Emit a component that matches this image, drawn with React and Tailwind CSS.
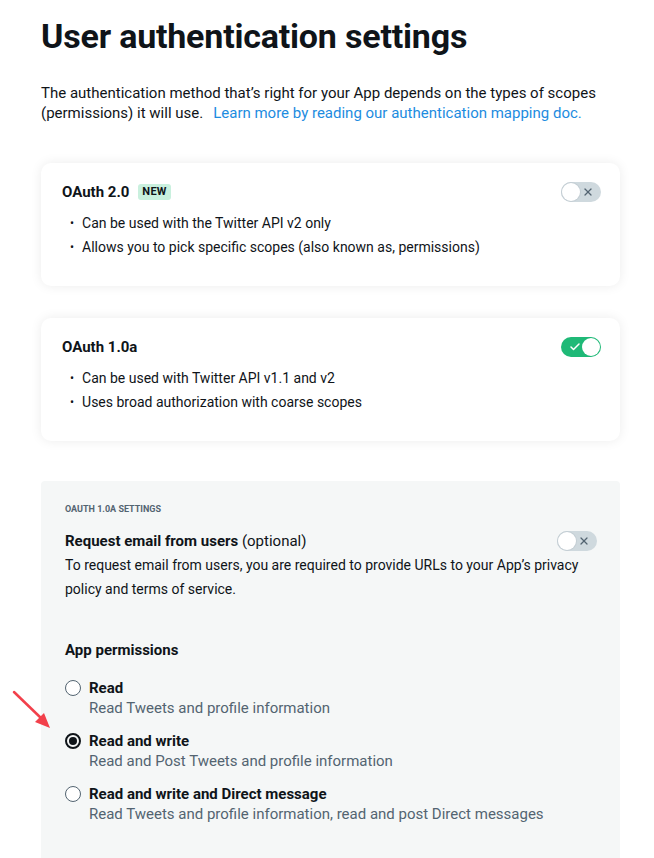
import { Check, X } from "lucide-react";

function Toggle({ on }) {
  if (on) {
    return (
      <div className="flex h-[20px] w-[40px] items-center justify-between rounded-full bg-[#1fb977] pl-[8px] pr-[1px]">
        <Check size={12} strokeWidth={3} className="text-white" />
        <div className="h-[18px] w-[18px] rounded-full bg-white" />
      </div>
    );
  }
  return (
    <div className="flex h-[20px] w-[40px] items-center justify-between rounded-full bg-[#cfd9de] pl-[1px] pr-[7px]">
      <div className="h-[18px] w-[18px] rounded-full bg-white shadow-[0_0_0_1px_#c4ced4]" />
      <X size={12} strokeWidth={2.5} className="text-[#536471]" />
    </div>
  );
}

function Card({ title, badge, on, items }) {
  return (
    <div className="rounded-[10px] bg-white pl-[21px] pr-[19px] pt-[19px] pb-[27px] shadow-[0_0_12px_rgba(0,0,0,0.08)]">
      <div className="flex items-center justify-between">
        <div className="flex items-center gap-[9px]">
          <span className="text-[15px] font-bold leading-[20px]">{title}</span>
          {badge && (
            <span className="rounded-[3px] bg-[#c9f0de] px-[4px] text-[11px] font-bold leading-[16px] tracking-wide text-[#0f1419]">
              {badge}
            </span>
          )}
        </div>
        <Toggle on={on} />
      </div>
      <ul className="mt-[9px] pl-[8px]">
        {items.map((t) => (
          <li key={t} className="flex items-center text-[14px] leading-[24px]">
            <span className="mr-[8px] text-[12px]">•</span>
            {t}
          </li>
        ))}
      </ul>
    </div>
  );
}

function Radio({ checked, label, desc }) {
  return (
    <div className="flex">
      <div
        className={
          checked
            ? "mt-[2px] flex h-[16px] w-[16px] items-center justify-center rounded-full border-[2px] border-[#0f1419]"
            : "mt-[2px] h-[16px] w-[16px] rounded-full border border-[#536471] bg-white"
        }
      >
        {checked && <div className="h-[8px] w-[8px] rounded-full bg-[#0f1419]" />}
      </div>
      <div className="ml-[8px]">
        <div className="text-[15px] font-bold leading-[20px]">{label}</div>
        <div className="text-[15px] leading-[20px] text-[#536471]">{desc}</div>
      </div>
    </div>
  );
}

export default function App() {
  return (
    <div
      className="relative min-h-[858px] bg-white px-[41px] pt-[16px] text-[#0f1419]"
      style={{ fontFamily: "Roboto, 'Liberation Sans', sans-serif" }}
    >
      <h1 className="text-[34px] font-bold leading-[40px] tracking-[-0.2px]">User authentication settings</h1>

      <p className="mt-[27px] text-[15px] leading-[20px]">
        The authentication method that’s right for your App depends on the types of scopes (permissions) it will use.
        <a className="ml-[10px] text-[#1d8ce0]">Learn more by reading our authentication mapping doc.</a>
      </p>

      <div className="mt-[40px] w-[579px]">
        <Card
          title="OAuth 2.0"
          badge="NEW"
          on={false}
          items={["Can be used with the Twitter API v2 only", "Allows you to pick specific scopes (also known as, permissions)"]}
        />
        <div className="h-[32px]" />
        <Card
          title="OAuth 1.0a"
          on={true}
          items={["Can be used with Twitter API v1.1 and v2", "Uses broad authorization with coarse scopes"]}
        />
      </div>

      <div className="mt-[40px] w-[579px] rounded-t-[4px] bg-[#f5f7f7] pl-[24px] pr-[23px] pt-[22px] pb-[40px]">
        <div className="text-[9px] font-bold uppercase leading-[12px] text-[#536471]">OAuth 1.0a settings</div>

        <div className="mt-[16px] flex items-center justify-between">
          <div className="text-[15px] leading-[20px]">
            <span className="font-bold">Request email from users</span> (optional)
          </div>
          <Toggle on={false} />
        </div>
        <p className="mt-[2px] text-[14px] leading-[24px]">
          To request email from users, you are required to provide URLs to your App’s privacy policy and terms of service.
        </p>

        <div className="mt-[39px] text-[15px] font-bold leading-[20px]">App permissions</div>

        <div className="mt-[18px] flex flex-col gap-[13px]">
          <Radio label="Read" desc="Read Tweets and profile information" />
          <Radio checked label="Read and write" desc="Read and Post Tweets and profile information" />
          <Radio label="Read and write and Direct message" desc="Read Tweets and profile information, read and post Direct messages" />
        </div>
      </div>

      <svg className="absolute left-[10px] top-[688px]" width="44" height="44" viewBox="0 0 44 44">
        <line x1="4" y1="4" x2="32" y2="31" stroke="#f2404b" strokeWidth="2.5" strokeLinecap="round" />
        <polygon points="40,40 25,34 34,25" fill="#f2404b" />
      </svg>
    </div>
  );
}
